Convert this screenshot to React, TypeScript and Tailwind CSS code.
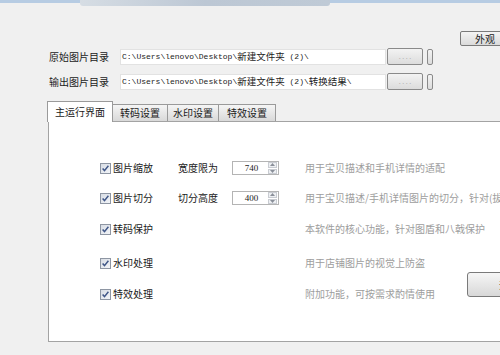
import React from "react";

function Check() {
  return (
    <svg width="11" height="11" viewBox="0 0 11 11" className="shrink-0">
      <defs>
        <linearGradient id="cbg" x1="0" y1="0" x2="1" y2="1">
          <stop offset="0" stopColor="#d6dbe3" />
          <stop offset="1" stopColor="#f4f6f9" />
        </linearGradient>
      </defs>
      <rect x="0.5" y="0.5" width="10" height="10" fill="url(#cbg)" stroke="#8e96a3" />
      <path d="M2.6 5.4 L4.5 7.6 L8.4 2.8" fill="none" stroke="#3f5687" strokeWidth="1.5" />
    </svg>
  );
}

function Spin({ v }: { v: string }) {
  return (
    <div className="w-[47px] h-[14px] bg-white border border-[#b4b4b4] flex items-center">
      <div className="flex-1 text-center text-[9px] leading-none font-['Liberation_Serif'] text-[#222] pl-[2px]">{v}</div>
      <div className="w-[9px] h-[12px] mr-[1px] flex flex-col gap-[1px]">
        <div className="flex-1 bg-[#eef0f3] border border-[#c9ccd2] flex items-center justify-center">
          <svg width="5" height="3" viewBox="0 0 5 3"><path d="M0 3 L2.5 0 L5 3Z" fill="#8a8f99" /></svg>
        </div>
        <div className="flex-1 bg-[#eef0f3] border border-[#c9ccd2] flex items-center justify-center">
          <svg width="5" height="3" viewBox="0 0 5 3"><path d="M0 0 L2.5 3 L5 0Z" fill="#8a8f99" /></svg>
        </div>
      </div>
    </div>
  );
}

function PathBox({ extra }: { extra?: string }) {
  return (
    <div className="w-[266px] h-[16px] bg-white border border-[#e2e2e2] flex items-center pl-[1px] whitespace-nowrap text-[#222] overflow-hidden">
      <span className="font-['Liberation_Mono'] text-[8px]">C:\Users\lenovo\Desktop\</span>
      <span className="text-[9.5px]">新建文件夹</span>
      <span className="font-['Liberation_Mono'] text-[8px]">&nbsp;(2)\</span>
      {extra ? <span className="text-[9.5px]">{extra}</span> : null}
      {extra ? <span className="font-['Liberation_Mono'] text-[8px]">\</span> : null}
    </div>
  );
}

function DirRow({ label, extra, mt }: { label: string; extra?: string; mt: string }) {
  return (
    <div className={`flex items-center h-[17px] ${mt}`}>
      <div className="w-[71px] ml-[49px] text-[10px] leading-none">{label}</div>
      <PathBox extra={extra} />
      <div className="w-[36px] h-[17px] ml-[1px] rounded-[2px] border border-[#8a8a8a] bg-gradient-to-b from-[#f3f3f3] to-[#dcdcdc] flex items-center justify-center text-[7px] text-[#b0b0b0] leading-none">
        . . . .
      </div>
      <div className="w-[6px] h-[16px] ml-[4px] rounded-[2px] border border-[#8a8a8a] bg-gradient-to-b from-[#f3f3f3] to-[#dcdcdc]" />
    </div>
  );
}

function OptRow({
  label,
  sub,
  val,
  desc,
  mt,
}: {
  label: string;
  sub?: string;
  val?: string;
  desc: string;
  mt: string;
}) {
  return (
    <div className={`grid grid-cols-[78px_54px_73px_auto] items-center h-[16px] ${mt}`}>
      <div className="flex items-center gap-[2px]">
        <Check />
        <span className="text-[10px] leading-none text-[#1a1a1a]">{label}</span>
      </div>
      <div className="text-[10px] leading-none text-[#1a1a1a]">{sub ?? ""}</div>
      <div>{val ? <Spin v={val} /> : null}</div>
      <div className="text-[10px] leading-none text-[#9d9d9d] whitespace-nowrap">{desc}</div>
    </div>
  );
}

export default function App() {
  return (
    <div className="w-[500px] h-[355px] overflow-hidden bg-[#f0f0f0] font-['Noto_Sans_CJK_SC',sans-serif] text-[#1a1a1a]">
      <div className="flex items-start h-[8px]">
        <div className="w-[80px] h-[3px] bg-[#b7cce3]" />
        <div className="w-[250px] h-[6px] rounded-b-[3px] bg-gradient-to-r from-[#d6dde4] via-[#bcc7d4] to-[#bfcad6]" />
        <div className="flex-1 h-[3px] bg-[#b7cce3]" />
      </div>

      <div className="mt-[23px] h-[15px] flex">
        <div className="ml-[460px] w-[50px] h-[15px] shrink-0 rounded-[2px] border border-[#7a7a7a] bg-gradient-to-b from-[#f4f4f4] to-[#dadada] flex items-center justify-center text-[10px] leading-none">
          外观
        </div>
      </div>

      <DirRow label="原始图片目录" mt="mt-[2px]" />
      <DirRow label="输出图片目录" extra="转换结果" mt="mt-[8px]" />

      <div className="mt-[11px] h-[20px] flex items-end pl-[47px]">
        <div className="relative z-10 w-[66px] h-[21px] mb-[-1px] bg-white border border-b-0 border-[#9a9a9a] flex items-center justify-center text-[10px] leading-none">
          主运行界面
        </div>
        <div className="w-[55px] h-[17px] bg-gradient-to-b from-[#f5f5f5] to-[#d9d9d9] border border-l-0 border-b-0 border-[#9a9a9a] flex items-center justify-center text-[10px] leading-none">
          转码设置
        </div>
        <div className="w-[51px] h-[17px] bg-gradient-to-b from-[#f5f5f5] to-[#d9d9d9] border border-l-0 border-b-0 border-[#9a9a9a] flex items-center justify-center text-[10px] leading-none">
          水印设置
        </div>
        <div className="w-[57px] h-[17px] bg-gradient-to-b from-[#f5f5f5] to-[#d9d9d9] border border-l-0 border-b-0 border-[#9a9a9a] flex items-center justify-center text-[10px] leading-none">
          特效设置
        </div>
      </div>

      <div className="ml-[48px] w-[480px] h-[221px] bg-white border border-[#a3a3a3] flex">
        <div className="w-[418px] shrink-0 pl-[51px] pt-[38px]">
          <OptRow label="图片缩放" sub="宽度限为" val="740" desc="用于宝贝描述和手机详情的适配" mt="" />
          <OptRow label="图片切分" sub="切分高度" val="400" desc="用于宝贝描述/手机详情图片的切分，针对(拔高图片)" mt="mt-[14px]" />
          <OptRow label="转码保护" desc="本软件的核心功能，针对图盾和八戟保护" mt="mt-[15px]" />
          <OptRow label="水印处理" desc="用于店铺图片的视觉上防盗" mt="mt-[18px]" />
          <OptRow label="特效处理" desc="附加功能，可按需求酌情使用" mt="mt-[15px]" />
        </div>
        <div className="pt-[150px]">
          <div className="w-[70px] h-[25px] rounded-[3px] border border-[#7a7a7a] bg-gradient-to-b from-[#f6f6f6] to-[#d8d8d8] flex items-center pl-[31px] text-[10px] leading-none whitespace-nowrap">
            开始
          </div>
        </div>
      </div>
    </div>
  );
}
